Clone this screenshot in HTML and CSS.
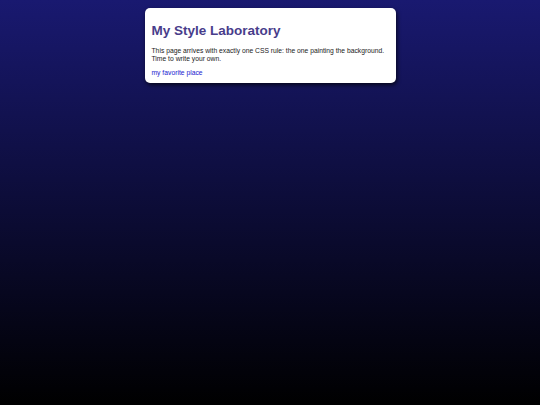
FILE: index.html
```html
<!DOCTYPE html>
<html>
<head>
<meta charset="utf-8">
<link rel="stylesheet" href="styles.css">
</head>
<body>
<main class="card">
  <h1 class="title">My Style Laboratory</h1>
  <p class="intro">This page arrives with exactly one CSS rule: the one painting the background. Time to write your own.</p>
  <p class="more"><a class="link" href="#">my favorite place</a></p>
</main>
</body>
</html>
```
FILE: styles.css
```css
html {
  height: 100%;
}
body {
  margin: 0;
  min-height: 100%;
  background: linear-gradient(to bottom, #191970 0%, #000000 100%);
  font-family: "Liberation Sans", Arial, sans-serif;
  display: flex;
  justify-content: center;
  align-items: flex-start;
}
.card {
  margin-top: 8px;
  width: 251px;
  box-sizing: border-box;
  background: #ffffff;
  border-radius: 5px;
  padding: 5px 7px 6px 7px;
  box-shadow: 1px 2px 4px rgba(0, 0, 0, 0.7);
}
.title {
  margin: 10px 0 8px 0;
  font-size: 13.5px;
  line-height: 15.5px;
  font-weight: bold;
  color: #483d8b;
}
.intro {
  margin: 0 0 6px 0;
  font-size: 6.75px;
  line-height: 8px;
  color: #1a1a1a;
}
.more {
  margin: 0;
  font-size: 6.75px;
  line-height: 8px;
}
.link {
  color: #1a1ad0;
  text-decoration: none;
}
```
